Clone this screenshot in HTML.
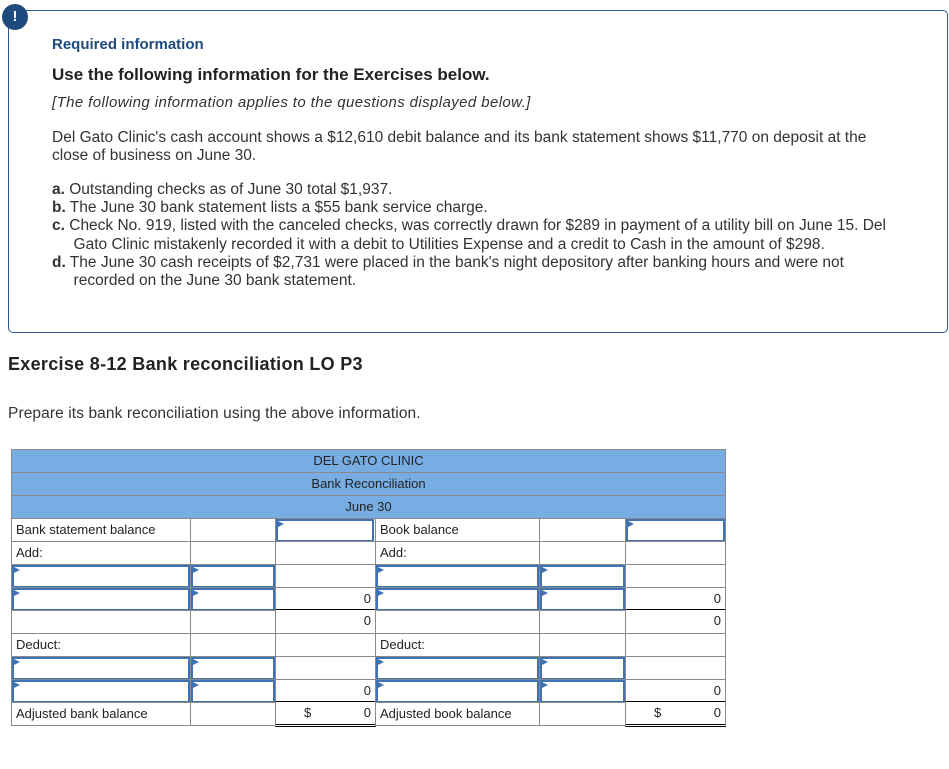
<!DOCTYPE html>
<html><head><style>
*{margin:0;padding:0;box-sizing:border-box}
body{width:949px;height:769px;background:#fff;font-family:"Liberation Sans",sans-serif;color:#333;position:relative;overflow:hidden}
.abs{position:absolute;white-space:nowrap}
.box{position:absolute;left:8px;top:10px;width:940px;height:323px;border:1px solid #2b5b8f;border-radius:5px}
.icon{position:absolute;left:2px;top:4px;width:26px;height:26px;border-radius:50%;background:#1e4a7d;color:#fff;font-weight:bold;font-size:15px;text-align:center;line-height:26px}
.t{font-size:15.5px;line-height:18.2px}
.c{position:absolute;height:24px;border:1px solid #8a8a8a;font-size:13px;line-height:22px;padding:0 4px;color:#222;background:#fff}
.h{position:absolute;left:11px;width:715px;height:24px;border:1px solid #8a8a8a;background:#78ade4;text-align:center;font-size:13px;line-height:22px;color:#222}
.in{position:absolute;height:23px;border:2px solid #3f72b3;background:#fff}
.in:before{content:"";position:absolute;left:0;top:0;border-left:6px solid #3f72b3;border-top:3px solid transparent;border-bottom:3px solid transparent}
.r{text-align:right}
</style></head><body>
<div class="box"></div>
<div class="icon">!</div>
<div class="abs" style="left:52px;top:36px;font-size:15px;font-weight:bold;color:#1e4a7d">Required information</div>
<div class="abs" style="left:52px;top:65px;font-size:17px;font-weight:bold;color:#222">Use the following information for the Exercises below.</div>
<div class="abs" style="left:52px;top:94px;font-size:15px;font-style:italic;letter-spacing:0.4px">[The following information applies to the questions displayed below.]</div>
<div class="abs t" style="left:52px;top:129px">Del Gato Clinic's cash account shows a $12,610 debit balance and its bank statement shows $11,770 on deposit at the<br>close of business on June 30.</div>
<div class="abs t" style="left:52px;top:181px"><b>a.</b> Outstanding checks as of June 30 total $1,937.<br><b>b.</b> The June 30 bank statement lists a $55 bank service charge.<br><b>c.</b> Check No. 919, listed with the canceled checks, was correctly drawn for $289 in payment of a utility bill on June 15. Del<br>&nbsp;&nbsp;&nbsp;&nbsp;&nbsp;Gato Clinic mistakenly recorded it with a debit to Utilities Expense and a credit to Cash in the amount of $298.<br><b>d.</b> The June 30 cash receipts of $2,731 were placed in the bank's night depository after banking hours and were not<br>&nbsp;&nbsp;&nbsp;&nbsp;&nbsp;recorded on the June 30 bank statement.</div>
<div class="abs" style="left:8px;top:354px;font-size:18px;font-weight:bold;color:#222;letter-spacing:0.3px">Exercise 8-12 Bank reconciliation LO P3</div>
<div class="abs" style="left:8px;top:405px;font-size:15.5px;letter-spacing:0.1px">Prepare its bank reconciliation using the above information.</div>

<div class="h" style="top:449px">DEL GATO CLINIC</div>
<div class="h" style="top:472px">Bank Reconciliation</div>
<div class="h" style="top:495px">June 30</div>

<div class="c" style="left:11px;top:518px;width:180px">Bank statement balance</div>
<div class="c" style="left:190px;top:518px;width:86px"></div>
<div class="c" style="left:275px;top:518px;width:101px"></div><div class="in" style="left:276px;top:519px;width:98px"></div>
<div class="c" style="left:375px;top:518px;width:165px">Book balance</div>
<div class="c" style="left:539px;top:518px;width:87px"></div>
<div class="c" style="left:625px;top:518px;width:101px"></div><div class="in" style="left:626px;top:519px;width:99px"></div>

<div class="c" style="left:11px;top:541px;width:180px">Add:</div>
<div class="c" style="left:190px;top:541px;width:86px"></div>
<div class="c" style="left:275px;top:541px;width:101px"></div>
<div class="c" style="left:375px;top:541px;width:165px">Add:</div>
<div class="c" style="left:539px;top:541px;width:87px"></div>
<div class="c" style="left:625px;top:541px;width:101px"></div>

<div class="c" style="left:11px;top:564px;width:180px"></div><div class="in" style="left:12px;top:565px;width:178px"></div>
<div class="c" style="left:190px;top:564px;width:86px"></div><div class="in" style="left:191px;top:565px;width:84px"></div>
<div class="c" style="left:275px;top:564px;width:101px"></div>
<div class="c" style="left:375px;top:564px;width:165px"></div><div class="in" style="left:376px;top:565px;width:163px"></div>
<div class="c" style="left:539px;top:564px;width:87px"></div><div class="in" style="left:540px;top:565px;width:85px"></div>
<div class="c" style="left:625px;top:564px;width:101px"></div>

<div class="c" style="left:11px;top:587px;width:180px"></div><div class="in" style="left:12px;top:588px;width:178px"></div>
<div class="c" style="left:190px;top:587px;width:86px"></div><div class="in" style="left:191px;top:588px;width:84px"></div>
<div class="c r" style="left:275px;top:587px;width:101px;border-bottom:2px solid #000">0</div>
<div class="c" style="left:375px;top:587px;width:165px"></div><div class="in" style="left:376px;top:588px;width:163px"></div>
<div class="c" style="left:539px;top:587px;width:87px"></div><div class="in" style="left:540px;top:588px;width:85px"></div>
<div class="c r" style="left:625px;top:587px;width:101px;border-bottom:2px solid #000">0</div>

<div class="c" style="left:11px;top:610px;width:180px"></div>
<div class="c" style="left:190px;top:610px;width:86px"></div>
<div class="c r" style="left:275px;top:610px;width:101px;border-top:none">0</div>
<div class="c" style="left:375px;top:610px;width:165px"></div>
<div class="c" style="left:539px;top:610px;width:87px"></div>
<div class="c r" style="left:625px;top:610px;width:101px;border-top:none">0</div>

<div class="c" style="left:11px;top:633px;width:180px">Deduct:</div>
<div class="c" style="left:190px;top:633px;width:86px"></div>
<div class="c" style="left:275px;top:633px;width:101px"></div>
<div class="c" style="left:375px;top:633px;width:165px">Deduct:</div>
<div class="c" style="left:539px;top:633px;width:87px"></div>
<div class="c" style="left:625px;top:633px;width:101px"></div>

<div class="c" style="left:11px;top:656px;width:180px"></div><div class="in" style="left:12px;top:657px;width:178px"></div>
<div class="c" style="left:190px;top:656px;width:86px"></div><div class="in" style="left:191px;top:657px;width:84px"></div>
<div class="c" style="left:275px;top:656px;width:101px"></div>
<div class="c" style="left:375px;top:656px;width:165px"></div><div class="in" style="left:376px;top:657px;width:163px"></div>
<div class="c" style="left:539px;top:656px;width:87px"></div><div class="in" style="left:540px;top:657px;width:85px"></div>
<div class="c" style="left:625px;top:656px;width:101px"></div>

<div class="c" style="left:11px;top:679px;width:180px"></div><div class="in" style="left:12px;top:680px;width:178px"></div>
<div class="c" style="left:190px;top:679px;width:86px"></div><div class="in" style="left:191px;top:680px;width:84px"></div>
<div class="c r" style="left:275px;top:679px;width:101px;border-bottom:2px solid #000">0</div>
<div class="c" style="left:375px;top:679px;width:165px"></div><div class="in" style="left:376px;top:680px;width:163px"></div>
<div class="c" style="left:539px;top:679px;width:87px"></div><div class="in" style="left:540px;top:680px;width:85px"></div>
<div class="c r" style="left:625px;top:679px;width:101px;border-bottom:2px solid #000">0</div>

<div class="c" style="left:11px;top:702px;width:180px">Adjusted bank balance</div>
<div class="c" style="left:190px;top:702px;width:86px"></div>
<div class="c r" style="left:275px;top:702px;width:101px;border-top:none;border-bottom:3px double #000;height:25px"><span style="float:left;margin-left:24px">$</span>0</div>
<div class="c" style="left:375px;top:702px;width:165px">Adjusted book balance</div>
<div class="c" style="left:539px;top:702px;width:87px"></div>
<div class="c r" style="left:625px;top:702px;width:101px;border-top:none;border-bottom:3px double #000;height:25px"><span style="float:left;margin-left:24px">$</span>0</div>
</body></html>
